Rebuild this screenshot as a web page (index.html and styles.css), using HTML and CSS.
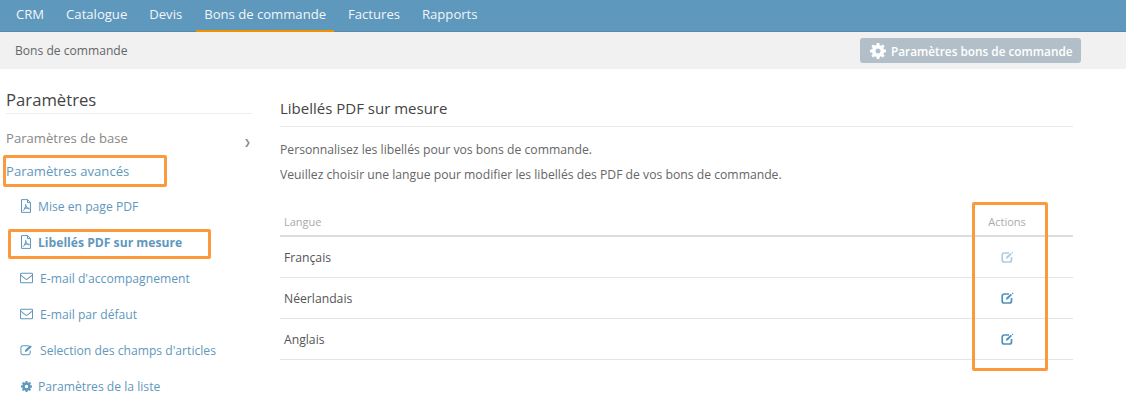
FILE: index.html
```html
<!DOCTYPE html>
<html lang="fr">
<head>
<meta charset="utf-8">
<title>Libellés PDF sur mesure</title>
<link rel="stylesheet" href="styles.css">
</head>
<body>
<svg class="defs" width="0" height="0" aria-hidden="true">
  <defs>
    <symbol id="i-pdf" viewBox="1.500 0 11 14"><path d="M2.500 .6h6l3 3v9.800h-9zM8.500 .6v3h3M4 11.800c1.500-1 3-4 2.800-6.800M5 9.200h5.500M7 6.500c.5 2 2 3.500 3.500 3.500" fill="none" stroke="currentColor" stroke-width="1"/></symbol>
    <symbol id="i-mail" viewBox="0 0 14 12"><path d="M1.500 1h11a1 1 0 0 1 1 1v8a1 1 0 0 1-1 1h-11a1 1 0 0 1-1-1V2a1 1 0 0 1 1-1zM.8 3l5 4c.7.5 1.700.5 2.400 0l5-4" fill="none" stroke="currentColor" stroke-width="1.100"/></symbol>
    <symbol id="i-edit-thin" viewBox="0 0 14 12"><path d="M9.500 1.500H3a2 2 0 0 0-2 2v5.500a2 2 0 0 0 2 2h6a2 2 0 0 0 2-2V6.500" fill="none" stroke="currentColor" stroke-width="1.100"/><path d="M5.500 6 10.800 .8 12.800 2.500 7 7.800 5.200 8z" fill="currentColor"/></symbol>
    <symbol id="i-edit" viewBox="0 0 13 12"><path d="M8 2H3.200A2 2 0 0 0 1.200 4v5a2 2 0 0 0 2 2h5.300a2 2 0 0 0 2-2V6" fill="none" stroke="currentColor" stroke-width="1.700"/><path d="M4.800 7.700 5.300 5.700 9.800 1.800 11 3 6.800 7.300z" fill="currentColor"/><path d="M10.800 1.400 11.600.6 12.400 1.400 11.600 2.200z" fill="currentColor"/></symbol>
    <symbol id="i-gear" viewBox="0 0 16 16"><path fill-rule="evenodd" d="M6.700 0h2.600l.4 2.200 1.300.5 1.800-1.300 1.800 1.800-1.300 1.800.5 1.300 2.200.4v2.600l-2.200.4-.5 1.300 1.300 1.800-1.800 1.800-1.800-1.300-1.300.5-.4 2.200H6.700l-.4-2.200-1.300-.5-1.800 1.300-1.800-1.800 1.300-1.800-.5-1.300L0 9.300V6.700l2.200-.4.5-1.300-1.300-1.800 1.800-1.800 1.800 1.300 1.300-.5zM8 5.500a2.500 2.500 0 1 0 0 5 2.500 2.500 0 0 0 0-5z" fill="currentColor"/></symbol>
  </defs>
</svg>

<nav class="topnav">
  <a class="topnav-item">CRM</a>
  <a class="topnav-item">Catalogue</a>
  <a class="topnav-item">Devis</a>
  <a class="topnav-item is-active">Bons de commande</a>
  <a class="topnav-item">Factures</a>
  <a class="topnav-item">Rapports</a>
</nav>

<header class="subbar">
  <span class="subbar-title">Bons de commande</span>
  <button class="subbar-btn" type="button"><svg class="subbar-icon"><use href="#i-gear"/></svg>Paramètres bons de commande</button>
</header>

<div class="layout">
  <aside class="sidebar">
    <h2 class="sidebar-title">Paramètres</h2>
    <div class="group-row"><span>Paramètres de base</span><span class="chevron">❯</span></div>
    <div class="group-active">Paramètres avancés</div>
    <ul class="submenu">
      <li class="submenu-item"><svg class="sm-icon"><use href="#i-pdf"/></svg><span>Mise en page PDF</span></li>
      <li class="submenu-item is-current"><svg class="sm-icon"><use href="#i-pdf"/></svg><span>Libellés PDF sur mesure</span></li>
      <li class="submenu-item wide"><svg class="sm-icon mail"><use href="#i-mail"/></svg><span>E-mail d'accompagnement</span></li>
      <li class="submenu-item wide"><svg class="sm-icon mail"><use href="#i-mail"/></svg><span>E-mail par défaut</span></li>
      <li class="submenu-item wide"><svg class="sm-icon mail"><use href="#i-edit-thin"/></svg><span>Selection des champs d'articles</span></li>
      <li class="submenu-item"><svg class="sm-icon gear"><use href="#i-gear"/></svg><span>Paramètres de la liste</span></li>
    </ul>
  </aside>

  <main class="content">
    <h1 class="content-title">Libellés PDF sur mesure</h1>
    <p class="intro first">Personnalisez les libellés pour vos bons de commande.</p>
    <p class="intro">Veuillez choisir une langue pour modifier les libellés des PDF de vos bons de commande.</p>
    <div class="table">
      <div class="thead"><span>Langue</span><span class="col-actions">Actions</span></div>
      <div class="trow"><span>Français</span><span class="col-actions"><svg class="edit is-faded"><use href="#i-edit"/></svg></span></div>
      <div class="trow"><span>Néerlandais</span><span class="col-actions"><svg class="edit"><use href="#i-edit"/></svg></span></div>
      <div class="trow"><span>Anglais</span><span class="col-actions"><svg class="edit"><use href="#i-edit"/></svg></span></div>
    </div>
  </main>
</div>

<div class="mark mark-group"></div>
<div class="mark mark-item"></div>
<div class="mark mark-actions"></div>
</body>
</html>
```
FILE: styles.css
```css
* { box-sizing: border-box; }
html, body { margin: 0; padding: 0; }
body {
  position: relative;
  width: 1126px;
  height: 415px;
  overflow: hidden;
  background: #fff;
  font-family: "Open Sans", sans-serif;
  color: #555;
}
.defs { position: absolute; }

.topnav {
  display: flex;
  height: 32px;
  padding-left: 8px;
  gap: 6px;
  background: #5f98bd;
  border-bottom: 1px solid #558bae;
}
.topnav-item {
  height: 32px;
  padding: 0 8px;
  color: #f2f6f9;
  font-size: 13.100px;
  font-weight: 500;
  line-height: 29px;
}
.topnav-item.is-active { border-bottom: 2px solid #f29100; }

.subbar {
  display: flex;
  justify-content: space-between;
  align-items: center;
  height: 37px;
  padding: 0 45px 0 15px;
  background: #f1f1f1;
}
.subbar-title { font-size: 12.100px; color: #666; }
.subbar-btn {
  display: flex;
  align-items: center;
  gap: 5px;
  height: 25px;
  width: 221px;
  padding: 0 0 0 10px;
  border: 0;
  border-radius: 3px;
  background: #b2bfc9;
  color: #fff;
  font: 600 11.800px "Open Sans", sans-serif;
  white-space: nowrap;
}
.subbar-icon { width: 16px; height: 16px; }

.layout { display: flex; }

.sidebar { width: 246px; margin-left: 6px; flex: none; }
.sidebar-title {
  margin: 20px 0 0;
  height: 25px;
  border-bottom: 1px solid #eee;
  font-size: 16.700px;
  font-weight: 400;
  line-height: 22px;
  color: #444;
}
.group-row {
  display: flex;
  justify-content: space-between;
  align-items: center;
  margin-top: 10px;
  height: 28px;
  font-size: 13.100px;
  color: #888;
}
.chevron { font-size: 8px; margin: 6px 1px 0 0; color: #888; }
.group-active {
  margin-top: 7px;
  height: 24px;
  font-size: 13.100px;
  line-height: 24px;
  color: #5f98bd;
}
.submenu { list-style: none; margin: 5px 0 0; padding: 0 0 0 14px; }
.submenu-item {
  display: flex;
  align-items: center;
  gap: 6px;
  height: 36px;
  font-size: 12.150px;
  color: #5f98bd;
}
.submenu-item.wide { gap: 7px; }
.submenu-item.is-current { font-weight: 700; }
.sm-icon { width: 12px; height: 14px; flex: none; }
.sm-icon.mail { width: 13px; height: 12px; }
.sm-icon.gear { width: 11px; height: 11px; margin-left: 1px; }

.content { width: 793px; margin-left: 28px; flex: none; }
.content-title {
  margin: 30px 0 0;
  height: 28px;
  border-bottom: 1px solid #e8e8e8;
  font-size: 15px;
  font-weight: 400;
  line-height: 18px;
  color: #444;
}
.intro { margin: 0; height: 25px; font-size: 12.200px; line-height: 25px; color: #666; }
.intro.first { margin-top: 10px; }
.table { margin-top: 13px; }
.thead, .trow {
  display: grid;
  grid-template-columns: 1fr 132px;
  padding-left: 4px;
  align-items: center;
}
.thead {
  align-items: end;
  height: 37px;
  padding-bottom: 6px;
  border-bottom: 2px solid #ddd;
  font-size: 11px;
  color: #aaa;
}
.trow {
  height: 41px;
  border-bottom: 1px solid #e4e4e4;
  font-size: 12.200px;
  color: #555;
}
.col-actions { display: flex; justify-content: center; white-space: nowrap; }
.edit { width: 13px; height: 12px; color: #4f93bd; }
.edit.is-faded { color: #aecde0; }

.mark { position: absolute; border: 3px solid #fb9a3c; border-radius: 2px; }
.mark-group { left: 3px; top: 155px; width: 164px; height: 32px; }
.mark-item { left: 8px; top: 229px; width: 203px; height: 30px; }
.mark-actions { left: 972px; top: 202px; width: 76px; height: 169px; }
```
